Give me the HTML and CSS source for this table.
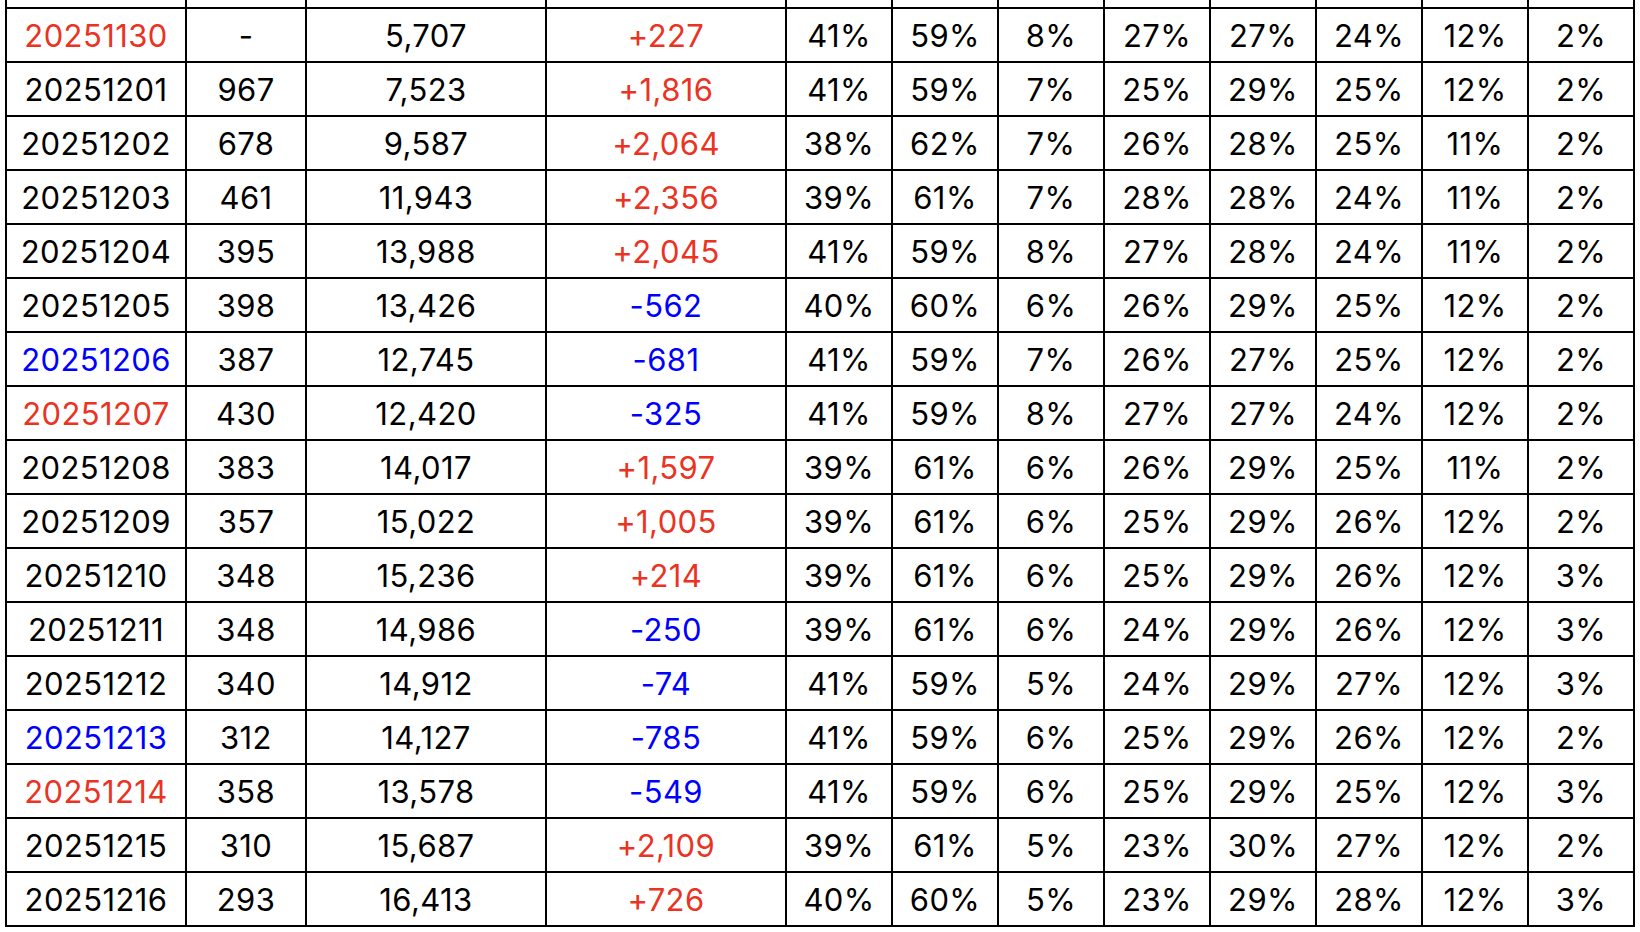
FILE: index.html
```html
<!DOCTYPE html>
<html lang="ko">
<head>
<meta charset="utf-8">
<title>Daily table</title>
<link rel="stylesheet" href="styles.css">
</head>
<body>
<div class="sheet">
<table class="grid">
<colgroup>
<col class="c-date"><col class="c-new"><col class="c-total"><col class="c-diff">
<col class="c-pct"><col class="c-pct"><col class="c-pct"><col class="c-pct"><col class="c-pct"><col class="c-pct"><col class="c-pct"><col class="c-pct">
</colgroup>
<tbody>
<tr class="cut"><td></td><td></td><td></td><td></td><td></td><td></td><td></td><td></td><td></td><td></td><td></td><td></td></tr>
<tr><td class="up">20251130</td><td>-</td><td>5,707</td><td class="up">+227</td><td>41%</td><td>59%</td><td>8%</td><td>27%</td><td>27%</td><td>24%</td><td>12%</td><td>2%</td></tr>
<tr><td>20251201</td><td>967</td><td>7,523</td><td class="up">+1,816</td><td>41%</td><td>59%</td><td>7%</td><td>25%</td><td>29%</td><td>25%</td><td>12%</td><td>2%</td></tr>
<tr><td>20251202</td><td>678</td><td>9,587</td><td class="up">+2,064</td><td>38%</td><td>62%</td><td>7%</td><td>26%</td><td>28%</td><td>25%</td><td>11%</td><td>2%</td></tr>
<tr><td>20251203</td><td>461</td><td>11,943</td><td class="up">+2,356</td><td>39%</td><td>61%</td><td>7%</td><td>28%</td><td>28%</td><td>24%</td><td>11%</td><td>2%</td></tr>
<tr><td>20251204</td><td>395</td><td>13,988</td><td class="up">+2,045</td><td>41%</td><td>59%</td><td>8%</td><td>27%</td><td>28%</td><td>24%</td><td>11%</td><td>2%</td></tr>
<tr><td>20251205</td><td>398</td><td>13,426</td><td class="down">-562</td><td>40%</td><td>60%</td><td>6%</td><td>26%</td><td>29%</td><td>25%</td><td>12%</td><td>2%</td></tr>
<tr><td class="down">20251206</td><td>387</td><td>12,745</td><td class="down">-681</td><td>41%</td><td>59%</td><td>7%</td><td>26%</td><td>27%</td><td>25%</td><td>12%</td><td>2%</td></tr>
<tr><td class="up">20251207</td><td>430</td><td>12,420</td><td class="down">-325</td><td>41%</td><td>59%</td><td>8%</td><td>27%</td><td>27%</td><td>24%</td><td>12%</td><td>2%</td></tr>
<tr><td>20251208</td><td>383</td><td>14,017</td><td class="up">+1,597</td><td>39%</td><td>61%</td><td>6%</td><td>26%</td><td>29%</td><td>25%</td><td>11%</td><td>2%</td></tr>
<tr><td>20251209</td><td>357</td><td>15,022</td><td class="up">+1,005</td><td>39%</td><td>61%</td><td>6%</td><td>25%</td><td>29%</td><td>26%</td><td>12%</td><td>2%</td></tr>
<tr><td>20251210</td><td>348</td><td>15,236</td><td class="up">+214</td><td>39%</td><td>61%</td><td>6%</td><td>25%</td><td>29%</td><td>26%</td><td>12%</td><td>3%</td></tr>
<tr><td>20251211</td><td>348</td><td>14,986</td><td class="down">-250</td><td>39%</td><td>61%</td><td>6%</td><td>24%</td><td>29%</td><td>26%</td><td>12%</td><td>3%</td></tr>
<tr><td>20251212</td><td>340</td><td>14,912</td><td class="down">-74</td><td>41%</td><td>59%</td><td>5%</td><td>24%</td><td>29%</td><td>27%</td><td>12%</td><td>3%</td></tr>
<tr><td class="down">20251213</td><td>312</td><td>14,127</td><td class="down">-785</td><td>41%</td><td>59%</td><td>6%</td><td>25%</td><td>29%</td><td>26%</td><td>12%</td><td>2%</td></tr>
<tr><td class="up">20251214</td><td>358</td><td>13,578</td><td class="down">-549</td><td>41%</td><td>59%</td><td>6%</td><td>25%</td><td>29%</td><td>25%</td><td>12%</td><td>3%</td></tr>
<tr><td>20251215</td><td>310</td><td>15,687</td><td class="up">+2,109</td><td>39%</td><td>61%</td><td>5%</td><td>23%</td><td>30%</td><td>27%</td><td>12%</td><td>2%</td></tr>
<tr><td>20251216</td><td>293</td><td>16,413</td><td class="up">+726</td><td>40%</td><td>60%</td><td>5%</td><td>23%</td><td>29%</td><td>28%</td><td>12%</td><td>3%</td></tr>
</tbody>
</table>
</div>
</body>
</html>
```

FILE: styles.css
```css
html, body {
  margin: 0;
  padding: 0;
  background: #ffffff;
}

.sheet {
  padding-left: 5px;
  height: 932px;
  overflow: hidden;
}

.grid {
  border-collapse: collapse;
  table-layout: fixed;
  width: 1630px;
  font-family: "Inter", "Roboto", sans-serif;
  font-size: 31px;
  letter-spacing: 0.4px;
  font-weight: 400;
  color: #000000;
}

.c-date { width: 180px; }
.c-new { width: 120px; }
.c-total { width: 240px; }
.c-diff { width: 240px; }
.c-pct { width: 106px; }

.grid td {
  border: 2px solid #000000;
  height: 52px;
  padding: 0;
  text-align: center;
  vertical-align: middle;
  line-height: 1;
  white-space: nowrap;
}

.grid .cut td {
  border-top: none;
  height: 7px;
}

.grid td.up { color: #ea3323; }
.grid td.down { color: #0000ff; }
```
